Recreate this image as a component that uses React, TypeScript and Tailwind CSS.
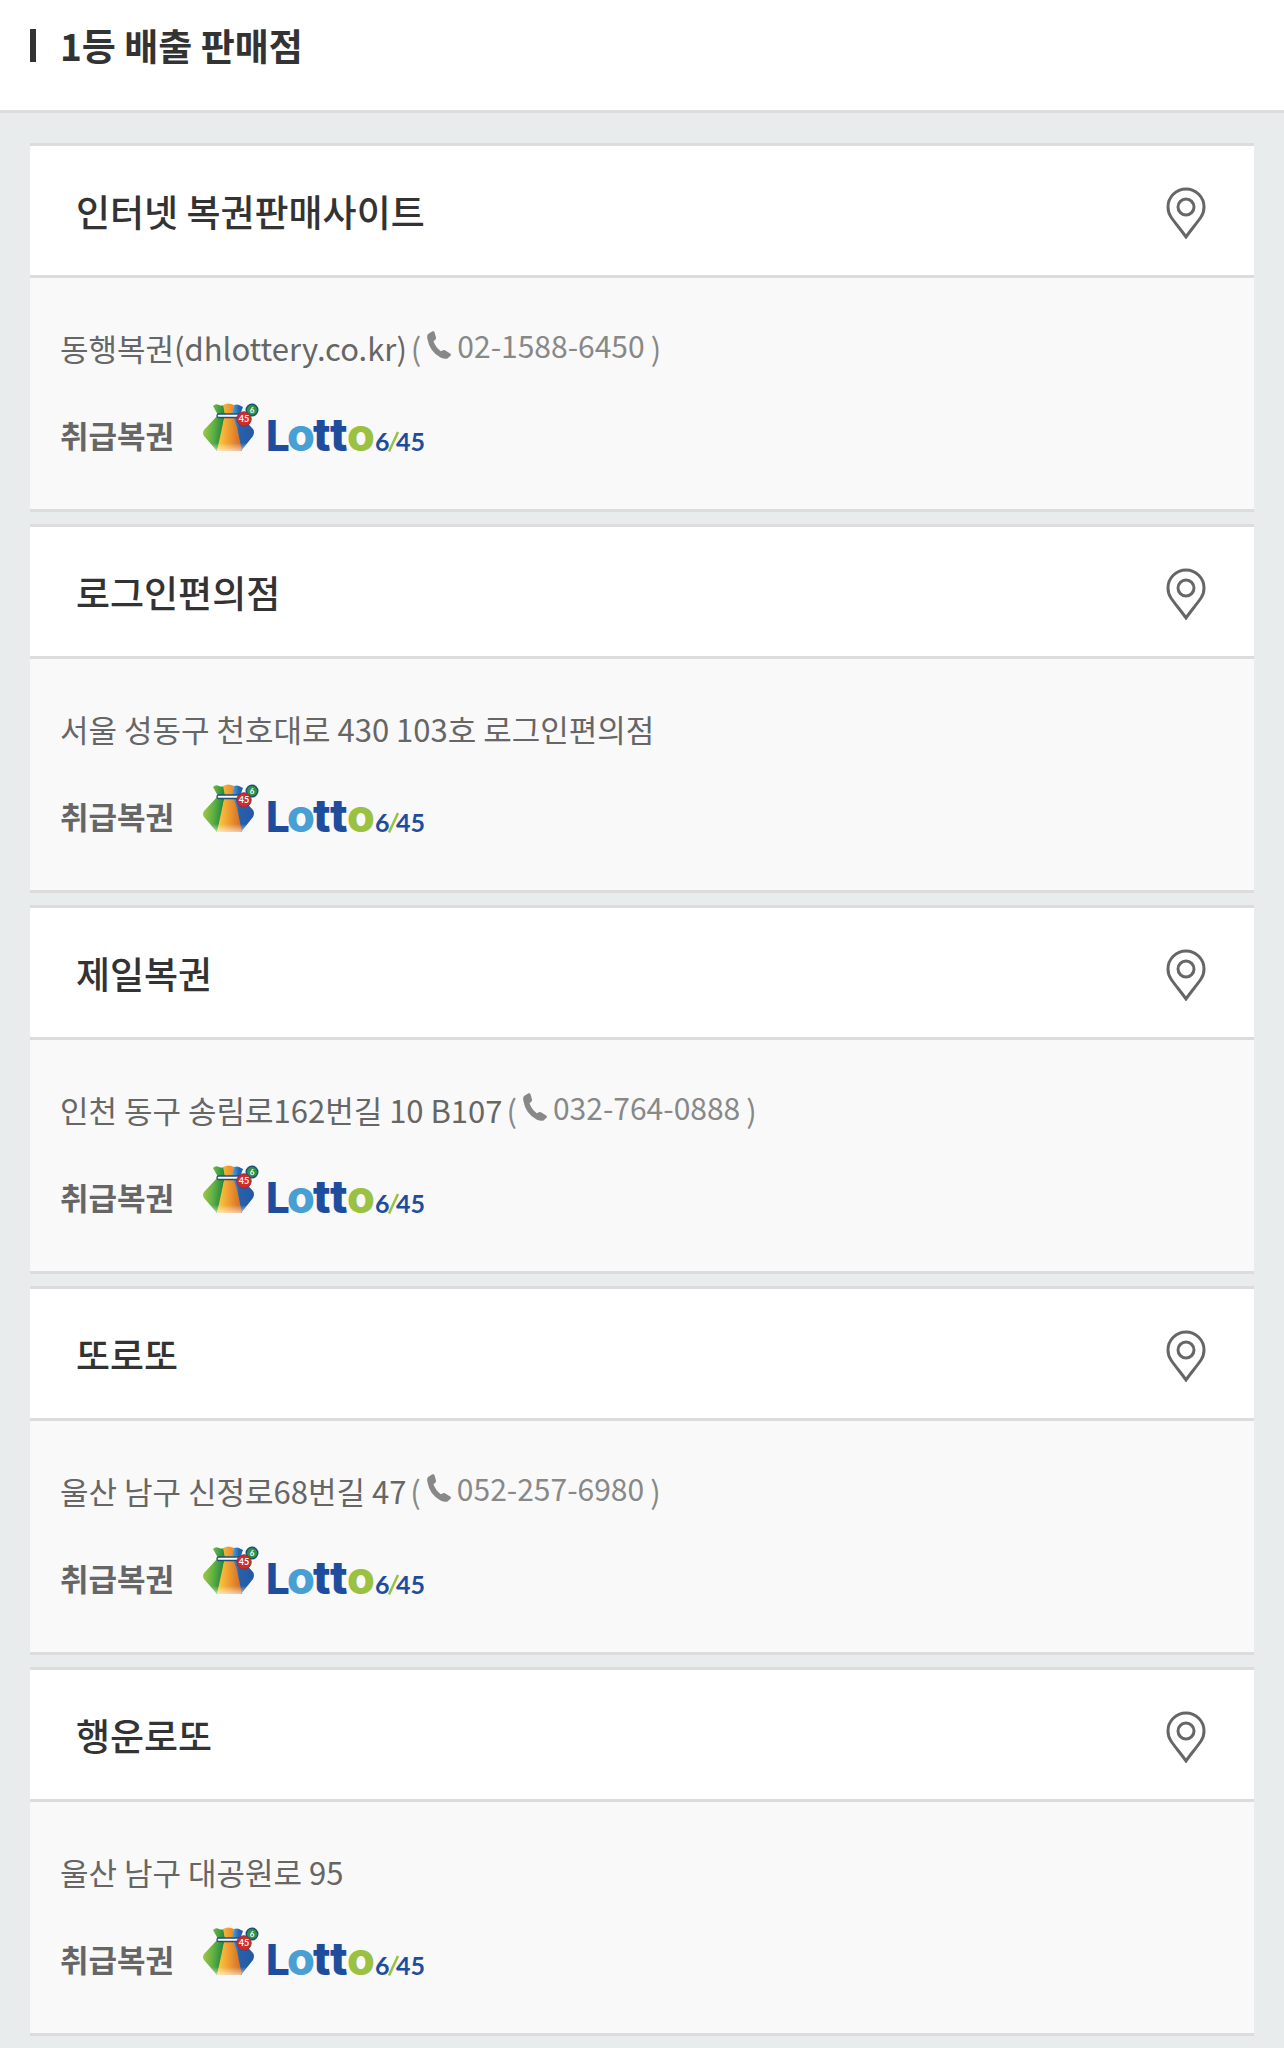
import React from "react";

type Store = { name: string; address: string; phone?: string };

const stores: Store[] = [
  { name: "인터넷 복권판매사이트", address: "동행복권(dhlottery.co.kr)", phone: "02-1588-6450" },
  { name: "로그인편의점", address: "서울 성동구 천호대로 430 103호 로그인편의점" },
  { name: "제일복권", address: "인천 동구 송림로162번길 10 B107", phone: "032-764-0888" },
  { name: "또로또", address: "울산 남구 신정로68번길 47", phone: "052-257-6980" },
  { name: "행운로또", address: "울산 남구 대공원로 95" },
];

function PinIcon() {
  return (
    <svg width="40" height="52" viewBox="0 0 40 52" fill="none" stroke="#666" strokeWidth="3" aria-hidden="true">
      <path d="M20 50 C16 44 9 36 5 30 C2.6 26.500 2 23.500 2 20 A18 18 0 0 1 38 20 C38 23.500 37.400 26.500 35 30 C31 36 24 44 20 50Z" />
      <circle cx="20" cy="20" r="8" />
    </svg>
  );
}

function PhoneIcon() {
  return (
    <svg width="24" height="28" viewBox="0 0 24 28" fill="#888" aria-hidden="true">
      <path d="M1 3 L5.500 0.300 Q7 -0.200 7.500 1.200 L9 6.500 Q9.300 8 8 9 L6.500 10.200 Q8.500 16 13.800 20.300 L16 19.200 Q17.300 18.700 18.400 19.600 L23.500 22.800 Q24.400 23.700 23.500 24.800 L20.500 27.600 Q17.500 28.400 13.500 26.500 Q2.500 20.500 0.300 7.500 Q-0.200 4.500 1 3Z" />
    </svg>
  );
}

function LottoLogo({ id }: { id: string }) {
  const green = `green-${id}`;
  const orange = `orange-${id}`;
  const blue = `blue-${id}`;
  const shine = `shine-${id}`;
  return (
    <svg width="224" height="50" viewBox="0 -1 224 50" className="overflow-visible" role="img" aria-label="Lotto 6/45">
      <defs>
        <linearGradient id={green} x1="0" x2="1" y1="0.300" y2="0.500">
          <stop offset="0" stopColor="#a5cb43" />
          <stop offset="0.500" stopColor="#62b045" />
          <stop offset="1" stopColor="#13823d" />
        </linearGradient>
        <linearGradient id={orange}>
          <stop offset="0" stopColor="#fbd03f" />
          <stop offset="0.500" stopColor="#ee9a31" />
          <stop offset="1" stopColor="#cf6726" />
        </linearGradient>
        <linearGradient id={blue}>
          <stop offset="0" stopColor="#59b5eb" />
          <stop offset="0.350" stopColor="#2563ad" />
          <stop offset="1" stopColor="#2557a5" />
        </linearGradient>
        <linearGradient id={shine} x1="0" x2="0" y1="0" y2="1">
          <stop offset="0" stopColor="#fff" stopOpacity="0" />
          <stop offset="1" stopColor="#fff" stopOpacity="0.600" />
        </linearGradient>
      </defs>
      <path d="M10 3 Q13 0 16 2 Q19 3 21 2 L22 11 L18 34 L14 48 L1 33 Q-1 30 1 27 L15 12Z" fill={`url(#${green})`} />
      <path d="M37 12 L50 26 Q52 29 50 33 L38 48 L30 34 L28 11 L31 2 Q34 1 36 2 L40 4Z" fill={`url(#${blue})`} />
      <path d="M20 2 Q25 -1 31 2 L29 11 L34 24 L39 48 L14 48 L22 11Z" fill={`url(#${orange})`} />
      <path d="M7 40 H45 L38 48 H14Z" fill={`url(#${shine})`} />
      <rect x="14" y="11" width="25" height="3.500" rx="1.700" fill="#fff" stroke="#1c5075" strokeWidth="1.300" />
      <circle cx="49" cy="7" r="5.800" fill="#2c9348" stroke="#1c5075" strokeWidth="1.400" />
      <circle cx="41" cy="16" r="7.200" fill="#d32a2c" stroke="#8b3040" strokeWidth="1" />
      <text x="49" y="10" textAnchor="middle" className="font-['Lato'] text-[8px] font-bold" fill="#fff">6</text>
      <text x="41" y="19" textAnchor="middle" className="font-['Lato'] text-[9px] font-bold" fill="#fff">45</text>
      <g className="font-['Inter'] font-extrabold">
        <text x="63" y="48" className="text-[42px]" fill="#1f4d9e">L</text>
        <text x="110" y="48" className="text-[46px]" fill="#1f4d9e">t</text>
        <text x="127" y="48" className="text-[46px]" fill="#1f4d9e">t</text>
        <text x="84" y="48" className="text-[45px]" fill="#479fd3">o</text>
        <text x="144" y="48" className="text-[45px]" fill="#9bc142">o</text>
      </g>
      <path d="M186 48.500 L195 29" stroke="#9bc142" strokeWidth="2.500" />
      <g className="font-['Lato'] text-[25px] font-bold" fill="#1f4d9e">
        <text x="172" y="48">6</text>
        <text x="193" y="48">45</text>
      </g>
    </svg>
  );
}

function StoreCard({ store, id }: { store: Store; id: string }) {
  return (
    <li className="border-y-3 border-[#dcdcdc] bg-[#f9f9f9]">
      <div className="flex items-center justify-between border-b-3 border-[#dcdcdc] bg-white pr-12 pl-[46px]">
        <h3 className="pt-[37px] pb-9 text-[37px] leading-[56px] font-medium text-[#333]">{store.name}</h3>
        <button type="button" className="pt-1" aria-label={`${store.name} 위치 보기`}>
          <PinIcon />
        </button>
      </div>
      <div className="px-[30px] pt-[46px] pb-[57px] text-[31px] text-[#666]">
        <p className="flex flex-wrap items-center gap-x-1 leading-[48px]">
          <span>{store.address}</span>
          {store.phone && (
            <span className="flex items-center gap-1.5 text-[#888]">
              (
              <a href={`tel:${store.phone}`} className="flex items-center gap-1.5 pb-1.5 text-[30px] leading-[42px]">
                <PhoneIcon />
                {store.phone}
              </a>
              )
            </span>
          )}
        </p>
        <div className="mt-[30px] flex items-end gap-[29px]">
          <strong className="leading-[34px] font-bold">취급복권</strong>
          <LottoLogo id={id} />
        </div>
      </div>
    </li>
  );
}

export default function App() {
  return (
    <main className="min-h-screen bg-[#e8ecec] pb-3 font-['Noto_Sans_CJK_KR',sans-serif]">
      <header className="flex items-center gap-6 border-b-3 border-[#dcdcdc] bg-white px-[30px] pt-[18px] pb-[38px]">
        <span className="h-[33px] w-1.5 bg-[#333]" />
        <h2 className="text-[37px] leading-[54px] font-bold text-[#333]">1등 배출 판매점</h2>
      </header>
      <ul className="flex flex-col gap-3 px-[30px] pt-[30px]">
        {stores.map((store, i) => (
          <StoreCard key={store.name} store={store} id={`s${i}`} />
        ))}
      </ul>
    </main>
  );
}
